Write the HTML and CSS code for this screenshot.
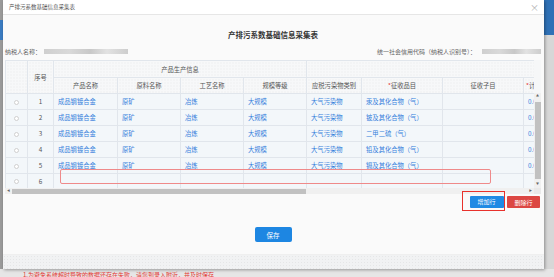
FILE: index.html
```html
<!DOCTYPE html>
<html lang="zh-CN">
<head>
  <meta charset="UTF-8" />
  <meta name="viewport" content="width=device-width, initial-scale=1.0"/>
  <title>产排污系数基础信息采集表</title>
  <link rel="stylesheet" href="styles.css">
</head>
<body>

  <div class="screen">
    <div class="side-left"><span class="side-blue"></span></div>

    <!-- Modal -->
    <div class="modal">
      <div class="modal-head">
        <span class="modal-title">产排污系数基础信息采集表</span>
        <span class="modal-close">×</span>
      </div>

      <div class="modal-body">
        <h1 class="form-title">产排污系数基础信息采集表</h1>

        <div class="info-row">
          <div class="info-item"><span>纳税人名称：</span><i class="blur blur-name"></i></div>
          <div class="info-item"><span>统一社会信用代码（纳税人识别号）：</span><i class="blur blur-code"></i></div>
        </div>

        <!-- Data grid -->
        <div class="grid">
          <div class="grid-main">
            <div class="grid-view">
              <table>
                <colgroup>
                  <col class="c-check"><col class="c-no"><col class="c-w64"><col class="c-w63"><col class="c-w63"><col class="c-w63">
                  <col class="c-w55"><col class="c-w81"><col class="c-w81"><col class="c-w80">
                </colgroup>
                <thead>
                  <tr class="head-top">
                    <th rowspan="2"></th>
                    <th rowspan="2">序号</th>
                    <th colspan="4">产品生产信息</th>
                    <th colspan="4"></th>
                  </tr>
                  <tr class="head-sub">
                    <th>产品名称</th>
                    <th>原料名称</th>
                    <th>工艺名称</th>
                    <th>规模等级</th>
                    <th>应税污染物类别</th>
                    <th><em>*</em>征收品目</th>
                    <th>征收子目</th>
                    <th class="th-left"><em>*</em>计税依据</th>
                  </tr>
                </thead>
                <tbody>
                  <tr>
                    <td class="td-check"><span class="radio"></span></td><td class="td-no">1</td>
                    <td>成品钢镀合金</td><td>原矿</td><td>冶炼</td><td>大规模</td>
                    <td>大气污染物</td><td>汞及其化合物（气）</td><td></td><td>0.0000</td>
                  </tr>
                  <tr>
                    <td class="td-check"><span class="radio"></span></td><td class="td-no">2</td>
                    <td>成品钢镀合金</td><td>原矿</td><td>冶炼</td><td>大规模</td>
                    <td>大气污染物</td><td>铍及其化合物（气）</td><td></td><td>0.0000</td>
                  </tr>
                  <tr>
                    <td class="td-check"><span class="radio"></span></td><td class="td-no">3</td>
                    <td>成品钢镀合金</td><td>原矿</td><td>冶炼</td><td>大规模</td>
                    <td>大气污染物</td><td>二甲二硫（气）</td><td></td><td>0.0000</td>
                  </tr>
                  <tr>
                    <td class="td-check"><span class="radio"></span></td><td class="td-no">4</td>
                    <td>成品钢镀合金</td><td>原矿</td><td>冶炼</td><td>大规模</td>
                    <td>大气污染物</td><td>铅及其化合物（气）</td><td></td><td>0.0000</td>
                  </tr>
                  <tr>
                    <td class="td-check"><span class="radio"></span></td><td class="td-no">5</td>
                    <td>成品钢镀合金</td><td>原矿</td><td>冶炼</td><td>大规模</td>
                    <td>大气污染物</td><td>镉及其化合物（气）</td><td></td><td>0.0000</td>
                  </tr>
                  <tr class="row-last">
                    <td class="td-check"><span class="radio"></span></td><td class="td-no">6</td>
                    <td></td><td></td><td></td><td></td>
                    <td></td><td></td><td></td><td></td>
                  </tr>
                </tbody>
              </table>
              <div class="row-mark"></div>
            </div>
            <div class="vscroll">
              <div class="vscroll-head"></div>
              <div class="vscroll-bar">
                <span class="arrow">▲</span>
                <span class="vthumb"></span>
                <span class="arrow">▼</span>
              </div>
            </div>
          </div>
          <div class="hscroll">
            <span class="arrow">◀</span>
            <div class="htrack"><span class="hthumb"></span></div>
            <span class="arrow">▶</span>
            <span class="corner"></span>
          </div>
        </div>

        <div class="row-tools">
          <span class="mark-box"><button class="btn btn-blue">增加行</button></span>
          <button class="btn btn-red">删除行</button>
        </div>

        <div class="save-row">
          <button class="btn btn-save">保存</button>
        </div>
      </div>

      <div class="modal-foot"></div>
    </div>

    <div class="side-right"><span class="side-blue"></span></div>
  </div>

  <p class="note">1.为避免系统超时导致的数据还存在失败，请您到录入附近，并及时保存</p>

</body>
</html>
```

FILE: styles.css
```css
* {
  margin: 0;
  padding: 0;
  box-sizing: border-box;
}
body {
  width: 554px;
  height: 277px;
  overflow: hidden;
  background-color: #e6e6e6;
  font-family: "Noto Sans CJK SC", "Noto Sans", sans-serif;
}
.screen {
  display: flex;
  height: 269px;
}
.side-left {
  width: 3px;
  background-color: #9b9b9b;
  padding-top: 20px;
}
.side-right {
  flex: 1;
  background-color: #d7d7d7;
}
.side-blue {
  display: block;
  height: 20px;
  background-color: #3b7cc2;
}
.side-right .side-blue {
  height: 35px;
  background-color: #2f71b6;
}

/* modal */
.modal {
  width: 541px;
  background-color: #fafafa;
  box-shadow: 1px 1px 3px rgba(0, 0, 0, 0.35);
  display: flex;
  flex-direction: column;
  position: relative;
}
.modal-head {
  height: 15px;
  background-color: #fff;
  border-bottom: 1px solid #e6e6e6;
  display: flex;
  align-items: center;
  justify-content: space-between;
  padding: 0 5px 0 6px;
}
.modal-title {
  font-size: 5.5px;
  color: #555;
}
.modal-close {
  font-size: 9px;
  line-height: 1;
  color: #b0b0b0;
}
.modal-body {
  flex: 1;
  padding: 0 3px 0 2px;
}
.form-title {
  margin-top: 14px;
  font-size: 7.5px;
  line-height: 12px;
  font-weight: bold;
  color: #333;
  text-align: center;
}
.info-row {
  margin-top: 4px;
  height: 12px;
  display: flex;
  align-items: center;
  justify-content: space-between;
  font-size: 6px;
  color: #666;
}
.info-item {
  display: flex;
  align-items: center;
}
.blur {
  display: inline-block;
  height: 5px;
  margin-left: 2px;
  background: linear-gradient(90deg, #cfcfcf 0%, #d9d9d9 30%, #c8c8c8 55%, #e2e2e2 75%, #cdcdcd 100%);
}
.blur-name {
  width: 84px;
}
.info-item:first-child .blur {
  margin-left: 3px;
}
.blur-code {
  width: 59px;
  margin-left: 6px;
}

/* grid */
.grid {
  margin-top: 3px;
  width: 536px;
}
.grid-main {
  display: flex;
  height: 128px;
}
.grid-view {
  flex: 1;
  overflow: hidden;
  position: relative;
}
table {
  table-layout: fixed;
  border-collapse: collapse;
  width: 598px;
  font-size: 6.3px;
}
.c-check { width: 22px; }
.c-no { width: 26px; }
.c-w64 { width: 64px; }
.c-w63 { width: 63px; }
.c-w55 { width: 55px; }
.c-w81 { width: 81px; }
.c-w80 { width: 80px; }
th, td {
  border: 1px solid #e1e6ec;
  white-space: nowrap;
  overflow: hidden;
}
th {
  font-weight: normal;
  color: #555;
  text-align: center;
  background-color: #f7f8f9;
  background-image: radial-gradient(#e6e8ea 0.6px, transparent 0.8px);
  background-size: 3px 3px;
}
th em {
  font-style: normal;
  color: #e53935;
}
.th-left {
  text-align: left;
  padding-left: 2px;
}
.head-top th { height: 17px; }
.head-sub th { height: 16px; }
td {
  height: 16px;
  padding: 0 4px;
  color: #3580dc;
  background-color: #f3f7fa;
}
.row-last td { height: 15px; }
.td-no {
  text-align: center;
  color: #555;
  padding: 0;
}
.td-check {
  text-align: center;
  padding: 0;
}
.radio {
  display: inline-block;
  width: 5px;
  height: 5px;
  border: 1px solid #cfcfcf;
  border-radius: 50%;
  background-color: #fff;
  vertical-align: middle;
}
.row-mark {
  position: absolute;
  left: 55px;
  top: 109px;
  width: 431px;
  height: 15px;
  border: 1px solid #ef8a8a;
  border-radius: 2px;
}
.vscroll {
  width: 7px;
  display: flex;
  flex-direction: column;
}
.vscroll-head {
  height: 33px;
  background-color: #f6f7f8;
}
.vscroll-bar {
  flex: 1;
  background-color: #f0f0f0;
  display: flex;
  flex-direction: column;
  align-items: center;
}
.arrow {
  font-size: 3px;
  line-height: 7px;
  width: 7px;
  height: 7px;
  text-align: center;
  color: #666;
  background-color: #f0f0f0;
}
.vthumb {
  flex: 1;
  width: 6px;
  margin: 2px 0;
  background-color: #c1c1c1;
}
.hscroll {
  display: flex;
  height: 6px;
  background-color: #f0f0f0;
}
.hscroll .arrow {
  height: 6px;
  line-height: 6px;
}
.htrack {
  flex: 1;
  display: flex;
  align-items: center;
}
.hthumb {
  width: 294px;
  height: 5px;
  background-color: #c1c1c1;
}
.corner {
  width: 7px;
  background-color: #e9e9e9;
}

/* buttons */
.row-tools {
  margin-top: -3px;
  display: flex;
  justify-content: flex-end;
  align-items: flex-start;
  gap: 2px;
  padding-right: 1px;
}
.mark-box {
  display: flex;
  border: 1.5px solid #e8312c;
  padding: 3.5px 0.5px 2.5px 6.5px;
}
.btn {
  border: none;
  color: #fff;
  font-family: inherit;
  font-size: 6px;
  border-radius: 1px;
}
.btn-blue {
  width: 34px;
  height: 12px;
  background-color: #1f8ae4;
}
.btn-red {
  width: 33px;
  height: 12px;
  margin-top: 5px;
  background-color: #dc4743;
}
.save-row {
  margin-top: 16px;
  display: flex;
  justify-content: center;
}
.btn-save {
  width: 37px;
  height: 15px;
  font-size: 6.5px;
  border-radius: 2px;
  background-color: #1d86e2;
}
.modal-foot {
  height: 15px;
  border-top: 1px solid #efefef;
  background-color: #f1f2f3;
  background-image: radial-gradient(#e5e6e7 0.6px, transparent 0.8px);
  background-size: 3px 3px;
}
.note {
  padding: 1px 0 0 23px;
  font-size: 6px;
  line-height: 9px;
  color: #e53935;
  white-space: nowrap;
}
```
